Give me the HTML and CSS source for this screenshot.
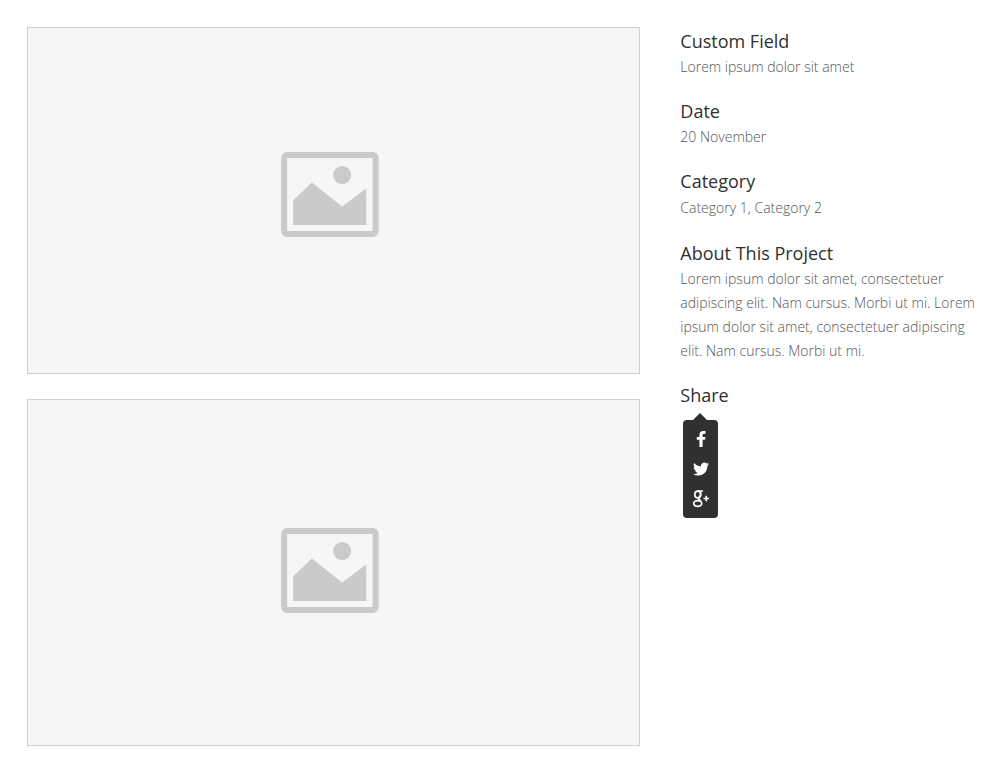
FILE: index.html
```html
<!DOCTYPE html>
<html lang="en">
<head>
<meta charset="utf-8">
<meta name="viewport" content="width=device-width, initial-scale=1">
<title>Project</title>
<link rel="stylesheet" href="styles.css">
</head>
<body>
<main class="project">
  <div class="gallery">
    <svg class="placeholder" viewBox="0 0 611 345" role="img" aria-label="Project image 1">
      <defs>
        <g id="picture">
          <rect x="3" y="3" width="91.500" height="79" rx="3" fill="none" stroke="#cacaca" stroke-width="6"/>
          <path d="M12 73V48.500L30.500 30.500L61 54.500L85 36.500V73Z" fill="#cacaca"/>
          <circle cx="61" cy="23" r="9" fill="#cacaca"/>
        </g>
      </defs>
      <use href="#picture" x="253" y="124"/>
    </svg>
    <svg class="placeholder" viewBox="0 0 611 345" role="img" aria-label="Project image 2">
      <use href="#picture" x="253" y="128"/>
    </svg>
  </div>
  <aside class="details">
    <section class="detail">
      <h2 class="detail-title">Custom Field</h2>
      <p class="detail-text">Lorem ipsum dolor sit amet</p>
    </section>
    <section class="detail">
      <h2 class="detail-title">Date</h2>
      <p class="detail-text">20 November</p>
    </section>
    <section class="detail">
      <h2 class="detail-title">Category</h2>
      <p class="detail-text categories">Category 1, Category 2</p>
    </section>
    <section class="detail">
      <h2 class="detail-title">About This Project</h2>
      <p class="detail-text">Lorem ipsum dolor sit amet, consectetuer adipiscing elit. Nam cursus. Morbi ut mi. Lorem ipsum dolor sit amet, consectetuer adipiscing elit. Nam cursus. Morbi ut mi.</p>
    </section>
    <section class="detail">
      <h2 class="detail-title">Share</h2>
      <nav class="share" aria-label="Share">
        <a class="share-link" href="#facebook" aria-label="Facebook">
          <svg class="share-icon" viewBox="0 0 18 18"><path d="M13.500 1.200V3.800H12C10.800 3.800 10.600 4.400 10.600 5.200V7H13.400L13 9.800H10.600V17H7.400V9.800H4.800V7H7.400V4.900C7.400 2.500 9.100 1.100 11.300 1.100C12.300 1.100 13.200 1.100 13.500 1.200Z"/></svg>
        </a>
        <a class="share-link" href="#twitter" aria-label="Twitter">
          <svg class="share-icon" viewBox="0 0 18 18"><path d="M17 4.300A6 6 0 0 1 15.400 6C15.500 11 11.900 15.500 6.200 15.500A9 9 0 0 1 1.200 14A6.500 6.500 0 0 0 6 12.700A3.300 3.300 0 0 1 2.900 10.400H4.300A3.300 3.300 0 0 1 1.700 7.100L3.200 7.500A3.300 3.300 0 0 1 2.200 3.100A9.300 9.300 0 0 0 9 6.500A3.300 3.300 0 0 1 14.600 3.500L16.700 2.700L15.200 4.700Z"/></svg>
        </a>
        <a class="share-link" href="#google-plus" aria-label="Google Plus">
          <svg class="share-icon" viewBox="0 0 18 18"><g fill="none" stroke="#fff" stroke-width="1.700"><ellipse cx="5.700" cy="4.500" rx="2.900" ry="3.400"/><ellipse cx="5.700" cy="13.500" rx="4" ry="2.800"/><path d="M6 1H11M7.500 1.200C9.500 3 9.200 5.300 7.500 7C5.800 8.300 6.500 9 8 10.300L9 11.500M11.500 8.500H17M14.250 5.800V11.300"/></g></svg>
        </a>
      </nav>
    </section>
  </aside>
</main>
</body>
</html>
```
FILE: styles.css
```css
body {
  margin: 0;
  background: #fff;
  font-family: "Open Sans", "Noto Sans", sans-serif;
}

.project {
  display: grid;
  grid-template-columns: minmax(0, 2fr) minmax(0, 1fr);
  gap: 40px;
  padding: 27px 13px 25px 27px;
}

.gallery {
  display: flex;
  flex-direction: column;
  gap: 25px;
}

.placeholder {
  display: block;
  box-sizing: border-box;
  width: 100%;
  border: 1px solid #d0d0d0;
  background: #f6f6f6;
}

.details {
  display: flex;
  flex-direction: column;
  gap: 18px;
}

.detail-title {
  margin: 0;
  color: #303030;
  font-size: 18px;
  font-weight: 400;
  line-height: 28px;
}

.detail-text {
  margin: 0;
  color: #555;
  font-size: 14px;
  font-weight: 300;
  line-height: 24px;
}

.categories {
  line-height: 26px;
}

.share {
  position: relative;
  display: flex;
  flex-direction: column;
  align-items: center;
  width: 35px;
  margin: 11px 0 0 3px;
  padding: 4px 0;
  border-radius: 4px;
  background: #303030;
}

.share::before {
  content: "";
  position: absolute;
  bottom: 100%;
  left: 10px;
  border: 7px solid transparent;
  border-top-width: 0;
  border-bottom-color: #303030;
}

.share-link {
  display: grid;
  place-items: center;
  width: 100%;
  height: 30px;
}

.share-icon {
  width: 18px;
  height: 18px;
  fill: #fff;
}
```
